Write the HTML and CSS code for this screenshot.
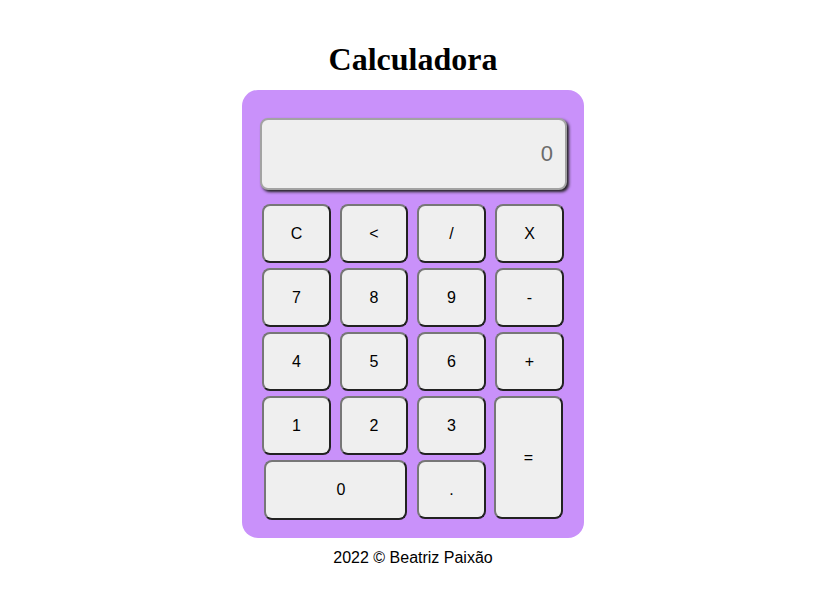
FILE: index.html
```html
<!DOCTYPE html>
<html lang="pt">
<head>
<meta charset="utf-8">
<title>Calculadora</title>
<link rel="stylesheet" href="styles.css">
</head>
<body>
<main class="page">
  <h1 class="title">Calculadora</h1>
  <section class="calc">
    <div class="display">0</div>
    <div class="keys">
      <button class="key">C</button>
      <button class="key">&lt;</button>
      <button class="key">/</button>
      <button class="key">X</button>
      <button class="key">7</button>
      <button class="key">8</button>
      <button class="key">9</button>
      <button class="key">-</button>
      <button class="key">4</button>
      <button class="key">5</button>
      <button class="key">6</button>
      <button class="key">+</button>
      <button class="key">1</button>
      <button class="key">2</button>
      <button class="key">3</button>
      <button class="key key-eq">=</button>
      <button class="key key-zero">0</button>
      <button class="key">.</button>
    </div>
  </section>
  <footer class="footer">2022 © Beatriz Paixão</footer>
</main>
</body>
</html>
```
FILE: styles.css
```css
* { box-sizing: border-box; }
body {
  margin: 0;
  background: #ffffff;
  font-family: "Liberation Sans", Arial, sans-serif;
}
.page {
  display: flex;
  flex-direction: column;
  align-items: center;
}
.title {
  font-family: "Liberation Serif", "Times New Roman", serif;
  font-weight: bold;
  font-size: 32px;
  line-height: 37px;
  margin: 41px 0 12px;
  color: #000;
}
.calc {
  width: 342px;
  height: 448px;
  background: #c991fa;
  border-radius: 16px;
  padding: 28px 17px 18px 18px;
}
.display {
  width: 307px;
  height: 72px;
  background: #efefef;
  border: 2px solid #a3a3a3;
  border-radius: 8px;
  box-shadow: 2px 2px 3px #222;
  display: flex;
  align-items: center;
  justify-content: flex-end;
  padding-right: 12px;
  font-size: 22px;
  color: #6b6b6b;
  margin-bottom: 14px;
}
.keys {
  display: grid;
  grid-template-columns: 69px 68px 69px 69px;
  grid-auto-rows: 59px;
  column-gap: 9px;
  row-gap: 5px;
  margin-left: 2px;
}
.key {
  font-family: "Liberation Sans", Arial, sans-serif;
  font-size: 16px;
  color: #000;
  background: #efefef;
  border: 2px solid;
  border-color: #777 #222 #222 #777;
  border-radius: 8px;
  padding: 0;
}
.key-eq {
  grid-column: 4;
  grid-row: 4 / span 2;
  margin-left: -1px;
  margin-right: 1px;
}
.key-zero {
  grid-column: 1 / span 2;
  margin: 0 1px 0 2px;
  height: 60px;
  padding-left: 11px;
}
.footer {
  margin-top: 11px;
  font-size: 16px;
  line-height: 18px;
  color: #000;
}
```
